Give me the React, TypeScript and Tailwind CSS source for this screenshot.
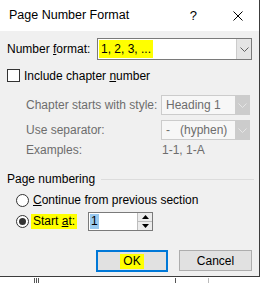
import React from 'react';

const Chevron = ({ color }: { color: string }) => (
  <svg width="9" height="5" viewBox="0 0 9 5">
    <path d="M0.5 0.5 L4.5 4.5 L8.5 0.5" fill="none" stroke={color} strokeWidth="1" />
  </svg>
);

const Radio = ({ checked }: { checked?: boolean }) => (
  <div className="w-[13px] h-[13px] rounded-full border border-[#333] bg-white flex items-center justify-center shrink-0">
    {checked && <div className="w-[7px] h-[7px] rounded-full bg-[#333]" />}
  </div>
);

const DisabledCombo = ({ value }: { value: string }) => (
  <div className="w-[89px] h-[20px] border border-[#cccccc] bg-[#f7f7f7] flex">
    <div className="flex-1 pl-[4px] flex items-center text-[#6d6d6d] whitespace-pre">{value}</div>
    <div className="w-[14px] bg-[#cccccc] flex items-center justify-center">
      <Chevron color="#e6e6e6" />
    </div>
  </div>
);

export default function App() {
  return (
    <div className="w-[262px] h-[283px] bg-white relative overflow-hidden text-[12px] leading-none text-black whitespace-nowrap" style={{ fontFamily: '"Liberation Sans", Arial, sans-serif' }}>
      <div className="w-[260px] h-[277px] border-r border-b border-[#3c3c3c] bg-[#f0f0f0] flex flex-col">
        {/* title bar */}
        <div className="h-[31px] bg-white flex items-center pl-[9px] pr-[16px] shrink-0">
          <span className="flex-1 text-[12.5px]">Page Number Format</span>
          <span className="mr-[36px] text-[13px]">?</span>
          <svg width="10" height="10" viewBox="0 0 10 10">
            <path d="M0.5 0.5 L9.5 9.5 M9.5 0.5 L0.5 9.5" stroke="#000" strokeWidth="1" />
          </svg>
        </div>

        <div className="flex flex-col pl-[7px]">
          {/* number format */}
          <div className="flex items-center mt-[7px] h-[22px]">
            <span className="w-[90px]">
              Number <span className="underline">f</span>ormat:
            </span>
            <div className="w-[155px] h-[22px] border border-[#7a7a7a] bg-white flex">
              <div className="flex-1 flex items-center pl-[1px]">
                <span className="bg-[#ffff00] h-[18px] px-[2px] flex items-center">1, 2, 3, ...</span>
              </div>
              <div className="w-[15px] bg-[#e5e5e5] border-l border-[#cccccc] flex items-center justify-center">
                <Chevron color="#606060" />
              </div>
            </div>
          </div>

          {/* include chapter number */}
          <div className="flex items-center mt-[9px] h-[13px]">
            <div className="w-[13px] h-[13px] border border-[#333] bg-white" />
            <span className="ml-[4px]">
              Include chapter <span className="underline">n</span>umber
            </span>
          </div>

          <div className="flex items-center mt-[13px] pl-[19px] text-[#6d6d6d]">
            <span className="w-[135px]">Chapter starts with style:</span>
            <DisabledCombo value="Heading 1" />
          </div>
          <div className="flex items-center mt-[5px] pl-[19px] text-[#6d6d6d]">
            <span className="w-[135px]">Use separator:</span>
            <DisabledCombo value="-   (hyphen)" />
          </div>
          <div className="flex items-center mt-[3px] pl-[19px] text-[#6d6d6d] h-[14px]">
            <span className="w-[136px]">Examples:</span>
            <span>1-1, 1-A</span>
          </div>

          {/* page numbering */}
          <div className="flex items-center mt-[15px] h-[14px]">
            <span>Page numbering</span>
            <div className="flex-1 h-px bg-[#dcdcdc] ml-[6px] mr-[5px]" />
          </div>
          <div className="flex items-center mt-[7px] pl-[9px] h-[14px]">
            <Radio />
            <span className="ml-[4px]">
              <span className="underline">C</span>ontinue from previous section
            </span>
          </div>
          <div className="flex items-center mt-[5px] pl-[9px] h-[18px]">
            <Radio checked />
            <div className="ml-[2px] bg-[#ffff00] h-[15px] px-[2px] flex items-center">
              <span>
                Start <span className="underline">a</span>t:
              </span>
            </div>
            <div className="ml-[11px] w-[65px] h-[19px] border border-[#7a7a7a] bg-white flex">
              <div className="flex-1 flex items-center pl-[1px]">
                <span className="bg-[#99c9ef] h-[15px] px-[1px] flex items-center">1</span>
              </div>
              <div className="w-[15px] flex flex-col border-l border-[#bdbdbd]">
                <div className="flex-1 bg-[#ececec] border-b border-[#bdbdbd] flex items-center justify-center">
                  <svg width="7" height="4" viewBox="0 0 7 4"><path d="M3.5 0 L7 4 L0 4 Z" fill="#000" /></svg>
                </div>
                <div className="flex-1 bg-[#ececec] flex items-center justify-center">
                  <svg width="7" height="4" viewBox="0 0 7 4"><path d="M0 0 L7 0 L3.5 4 Z" fill="#000" /></svg>
                </div>
              </div>
            </div>
          </div>

          {/* buttons */}
          <div className="flex justify-end mt-[20px] pr-[7px] gap-[11px]">
            <div className="w-[72px] h-[22px] border-2 border-[#0078d7] bg-[#e1e1e1] flex items-center justify-center">
              <span className="bg-[#ffff00] h-[15px] px-[3px] flex items-center">OK</span>
            </div>
            <div className="w-[73px] h-[21px] border border-[#adadad] bg-[#e1e1e1] flex items-center justify-center">
              Cancel
            </div>
          </div>
        </div>
      </div>
      {/* document fragments behind the dialog */}
      <div className="absolute left-[34px] top-[278px] w-[6px] h-[5px] flex gap-[1px]">
        <div className="w-px h-full bg-[#555]" />
        <div className="w-px h-full bg-[#555]" />
        <div className="w-px h-full bg-[#555]" />
      </div>
      <div className="absolute left-[175px] top-[278px] w-px h-[5px] bg-[#555]" />
      <div className="absolute left-[208px] top-[278px] w-px h-[5px] bg-[#bbb]" />
    </div>
  );
}
